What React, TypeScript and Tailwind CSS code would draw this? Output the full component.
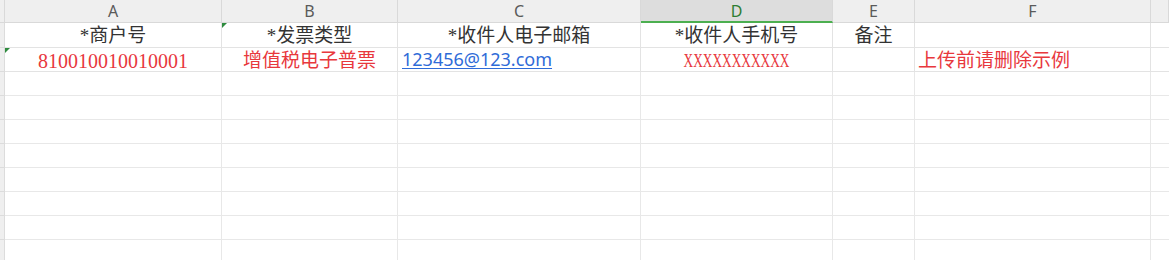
const cols = ['A', 'B', 'C', 'D', 'E', 'F', ''];

const serif = 'font-["Liberation_Serif","Noto_Sans_CJK_SC",serif]';

function Tri() {
  return (
    <span className="absolute left-0 top-0 h-0 w-0 border-r-[5px] border-t-[5px] border-r-transparent border-t-[#2e8b3e]" />
  );
}

export default function App() {
  const emptyRows = Array.from({ length: 8 });
  return (
    <div className="h-[260px] w-[1169px] overflow-hidden bg-white font-['Noto_Sans','Noto_Sans_CJK_SC',sans-serif]">
      <div className="grid grid-cols-[5px_217px_176px_243px_192px_82px_236px_1fr]">
        {/* column headers */}
        <div className="h-[23px] border-b border-r border-[#d9d9d9] bg-[#efefef]" />
        {cols.map((c, i) =>
          c === 'D' ? (
            <div
              key={i}
              className="flex h-[23px] items-center justify-center border-b-2 border-r border-b-[#4caf50] border-r-[#d9d9d9] bg-[#dddddd] pt-[1px] text-[16px] text-[#2e7d32]"
            >
              {c}
            </div>
          ) : (
            <div
              key={i}
              className="flex h-[23px] items-center justify-center border-b border-r border-[#d9d9d9] bg-[#efefef] text-[16px] text-[#5a5a5a]"
            >
              {c}
            </div>
          )
        )}

        {/* row 1 */}
        <div className="h-[25px] border-b border-r border-[#dcdcdc] bg-[#efefef]" />
        <div className={`flex h-[25px] items-center justify-center border-b border-r border-[#e3e3e3] pt-[2px] text-[19px] text-[#333] ${serif}`}>*商户号</div>
        <div className={`relative flex h-[25px] items-center justify-center border-b border-r border-[#e3e3e3] pt-[2px] text-[19px] text-[#333] ${serif}`}>
          <Tri />
          *发票类型
        </div>
        <div className={`flex h-[25px] items-center justify-center border-b border-r border-[#e3e3e3] pt-[2px] text-[19px] text-[#333] ${serif}`}>*收件人电子邮箱</div>
        <div className={`flex h-[25px] items-center justify-center border-b border-r border-[#e3e3e3] pt-[2px] text-[19px] text-[#333] ${serif}`}>*收件人手机号</div>
        <div className={`flex h-[25px] items-center justify-center border-b border-r border-[#e3e3e3] pt-[2px] text-[19px] text-[#333] ${serif}`}>备注</div>
        <div className="h-[25px] border-b border-r border-[#e3e3e3]" />
        <div className="h-[25px] border-b border-[#e3e3e3]" />

        {/* row 2 */}
        <div className="h-[24px] border-b border-r border-[#dcdcdc] bg-[#efefef]" />
        <div className={`relative flex h-[24px] items-center justify-center border-b border-r border-[#e3e3e3] pt-[3px] text-[20px] text-[#e8383d] ${serif}`}>
          <Tri />
          810010010010001
        </div>
        <div className={`flex h-[24px] items-center justify-center border-b border-r border-[#e3e3e3] pt-[3px] text-[19px] text-[#e8383d] ${serif}`}>增值税电子普票</div>
        <div className="flex h-[24px] items-start border-b border-r border-[#e3e3e3] pl-[4px] text-[18px] leading-[22px] text-[#2f6bd8]">
          <span className="underline underline-offset-2">123456@123.com</span>
        </div>
        <div className={`flex h-[24px] items-center justify-center overflow-hidden border-b border-r border-[#e3e3e3] pt-[3px] text-[18px] text-[#e8383d] ${serif}`}>
          <span className="inline-block scale-x-[0.74]">XXXXXXXXXXX</span>
        </div>
        <div className="h-[24px] border-b border-r border-[#e3e3e3]" />
        <div className={`flex h-[24px] items-center border-b border-r border-[#e3e3e3] pl-[3px] pt-[3px] text-[19px] whitespace-nowrap text-[#e8383d] ${serif}`}>上传前请删除示例</div>
        <div className="h-[24px] border-b border-[#e3e3e3]" />

        {/* empty rows */}
        {emptyRows.map((_, r) => (
          <div key={r} className="contents">
            <div className="h-[24px] border-b border-r border-[#dcdcdc] bg-[#efefef]" />
            {cols.map((_, i) => (
              <div
                key={i}
                className={`h-[24px] border-b border-[#e8e8e8] ${i < 6 ? 'border-r' : ''}`}
              />
            ))}
          </div>
        ))}
      </div>
    </div>
  );
}
